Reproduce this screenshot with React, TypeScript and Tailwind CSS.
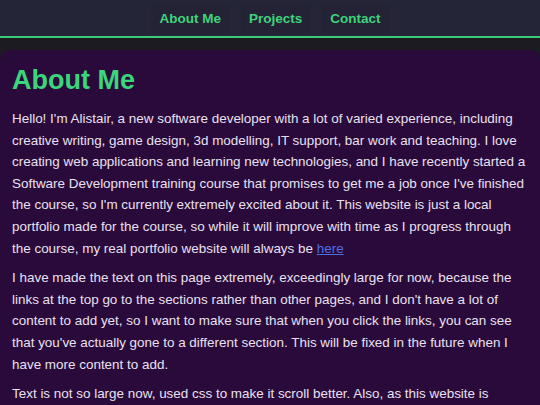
import React from 'react';

const links = ['About Me', 'Projects', 'Contact'];

export default function App() {
  return (
    <div
      className="h-[405px] w-[540px] overflow-hidden bg-[#1b1b21]"
      style={{ fontFamily: '"Liberation Sans", Arial, sans-serif' }}
    >
      {/* Top navigation */}
      <nav className="flex h-[38px] items-start justify-center gap-[12px] border-b-2 border-[#3fc979] bg-[#252538] pt-[5px]">
        {links.map((label) => (
          <a
            key={label}
            href="#"
            className="flex h-[28px] items-center bg-[#232335] px-[8px] text-[13.5px] font-bold text-[#3fd27b]"
          >
            {label}
          </a>
        ))}
      </nav>

      {/* Main content card */}
      <main className="mt-[12px] rounded-t-[10px] bg-[#2a0a3a] px-[12px] pt-[14px] text-[13.45px] leading-[21.6px] text-[#e9e1f1]">
        <h1 className="mb-[12px] text-[27px] font-bold leading-[32px] text-[#3ad67b]">About Me</h1>
        <p className="mb-[8px]">
          Hello! I'm Alistair, a new software developer with a lot of varied experience, including
          creative writing, game design, 3d modelling, IT support, bar work and teaching. I love
          creating web applications and learning new technologies, and I have recently started a
          Software Development training course that promises to get me a job once I've finished
          the course, so I'm currently extremely excited about it. This website is just a local
          portfolio made for the course, so while it will improve with time as I progress through
          the course, my real portfolio website will always be{' '}
          <a href="#" className="text-[#4d6fe6] underline">
            here
          </a>
        </p>
        <p className="mb-[8px]">
          I have made the text on this page extremely, exceedingly large for now, because the
          links at the top go to the sections rather than other pages, and I don't have a lot of
          content to add yet, so I want to make sure that when you click the links, you can see
          that you've actually gone to a different section. This will be fixed in the future when I
          have more content to add.
        </p>
        <p className="mb-[8px]">
          Text is not so large now, used css to make it scroll better. Also, as this website is
          currently a work in progress, some sections may be missing content for a while.
        </p>
      </main>
    </div>
  );
}
